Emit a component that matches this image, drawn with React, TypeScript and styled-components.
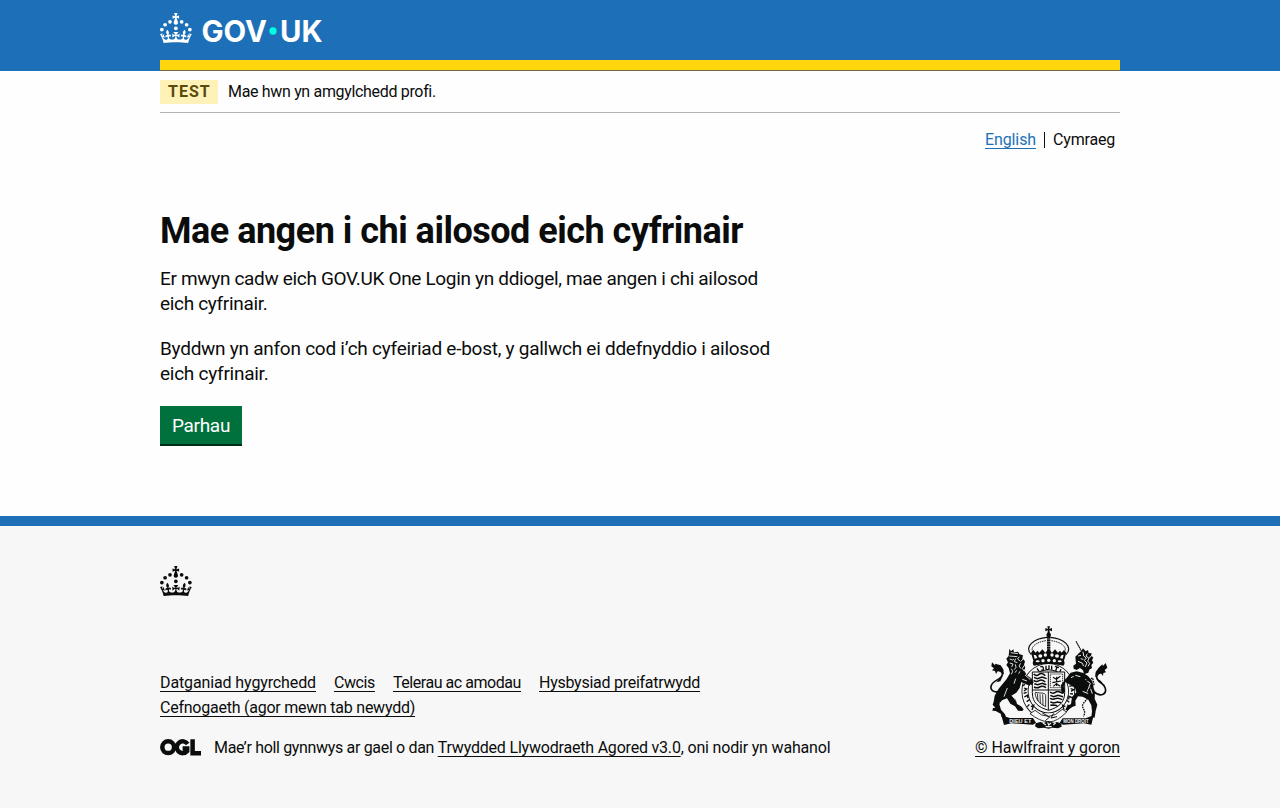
import React from "react";
import styled, { createGlobalStyle } from "styled-components";

const ink = "#0b0c0c";
const blue = "#1d70b8";

const GlobalStyle = createGlobalStyle`
  body {
    margin: 0;
    background: #fefefe;
    color: ${ink};
    font-family: Roboto, "Liberation Sans", sans-serif;
    font-size: 16px;
    line-height: 20px;
  }
`;

const Container = styled.div`
  width: 960px;
  margin: 0 auto;
`;

const Header = styled.header`
  background: ${blue};
  height: 71px;
`;

const HeaderInner = styled(Container)`
  box-sizing: border-box;
  height: 71px;
  padding-top: 13px;
  border-bottom: 1px solid #6b6740;
  box-shadow: inset 0 -10px 0 #ffd60d;
`;

const Logo = styled.svg`
  display: block;
  overflow: visible;
`;

const PhaseBanner = styled(Container)`
  box-sizing: border-box;
  display: flex;
  align-items: center;
  gap: 10px;
  height: 42px;
  padding-top: 1px;
  border-bottom: 1px solid #b1b4b6;
`;

const Tag = styled.strong`
  box-sizing: border-box;
  width: 58px;
  height: 24px;
  padding-left: 8px;
  background: #fff2b8;
  color: #5a4b0a;
  font-weight: 700;
  line-height: 24px;
  letter-spacing: 1px;
`;

const Text = styled.span<{ $tracking?: number }>`
  white-space: pre;
  letter-spacing: ${(p) => p.$tracking ?? 0}px;
`;

const Link = styled.a<{ $tracking?: number; $color?: string }>`
  color: ${(p) => p.$color ?? ink};
  letter-spacing: ${(p) => p.$tracking ?? 0}px;
  white-space: nowrap;
  text-decoration: underline;
  text-decoration-thickness: 1px;
  text-underline-offset: 3px;
  text-decoration-skip-ink: none;
`;

const LanguageNav = styled(Container)`
  box-sizing: border-box;
  display: flex;
  justify-content: flex-end;
  align-items: center;
  height: 54px;
  padding-right: 5px;
`;

const Divider = styled.span`
  width: 1px;
  height: 16px;
  margin: 0 8px;
  background: ${ink};
`;

const Main = styled.main`
  width: 960px;
  height: 349px;
  margin: 0 auto;
`;

const Content = styled.div`
  width: 640px;
  padding-top: 44px;
`;

const Title = styled.h1`
  margin: 0 0 15px;
  font-size: 36px;
  line-height: 40px;
  font-weight: 700;
  letter-spacing: -0.5px;
  white-space: nowrap;
`;

const Paragraph = styled.p<{ $tracking: number }>`
  width: 620px;
  margin: 0 0 20px;
  font-size: 19px;
  line-height: 25px;
  letter-spacing: ${(p) => p.$tracking}px;
`;

const Button = styled.button`
  box-sizing: border-box;
  display: block;
  width: 82px;
  height: 38px;
  padding: 2px 0 0;
  border: 0;
  background: #00703c;
  box-shadow: 0 2px 0 #002d18;
  color: #fff;
  font-family: inherit;
  font-size: 19px;
  line-height: 36px;
  letter-spacing: -0.3px;
`;

const Footer = styled.footer`
  box-sizing: border-box;
  height: 292px;
  padding-top: 40px;
  border-top: 10px solid ${blue};
  background: #f7f7f7;
`;

const FooterMeta = styled.div`
  display: flex;
  justify-content: space-between;
  align-items: flex-end;
  margin-top: 30px;
`;

const FooterLinks = styled.div`
  display: flex;
  flex-wrap: wrap;
  column-gap: 18px;
  width: 700px;
  line-height: 25px;
`;

const License = styled.div`
  display: flex;
  align-items: center;
  height: 25px;
  margin-top: 15px;
`;

const OglMark = styled.svg`
  margin-right: 13px;
  flex: none;
`;

const Copyright = styled.div`
  display: flex;
  flex-direction: column;
  align-items: flex-end;
  line-height: 25px;
`;

const Arms = styled.svg`
  margin: 0 12px 5px 0;
`;

function Crown() {
  return (
    <g>
      <circle cx="20" cy="17.6" r="3.7" />
      <circle cx="10.2" cy="23.5" r="3.7" />
      <circle cx="3.7" cy="33.2" r="3.7" />
      <circle cx="31.7" cy="30.6" r="3.7" />
      <circle cx="43.3" cy="17.6" r="3.7" />
      <circle cx="53.2" cy="23.5" r="3.7" />
      <circle cx="59.7" cy="33.2" r="3.7" />
      <path d="M33.1,9.8c.2-.1.3-.3.5-.5l4.6,2.4v-6.8l-4.6,1.5c-.1-.2-.3-.3-.5-.5l1.9-5.9h-6.7l1.9,5.9c-.2.1-.3.3-.5.5l-4.6-1.5v6.8l4.6-2.4c.1.2.3.3.5.5l-2.6,8c-.9,2.8,1.2,5.7,4.1,5.7h0c3,0,5.1-2.9,4.1-5.7l-2.6-8ZM37,37.9s-3.4,3.8-4.1,6.1c2.2,0,4.2-.5,6.4-2.8l-.7,8.5c-2-2.8-4.4-4.1-5.7-3.8.1,3.1.5,6.7,5.8,7.2,3.7.3,6.7-1.5,7-3.8.4-2.6-2-4.3-3.7-1.6-1.4-4.5,2.4-6.1,4.9-3.2-1.9-4.5-1.8-7.7,2.4-10.9,3,4,2.6,7.3-1.2,11.1,2.4-1.3,6.2,0,4,4.6-1.2-2.8-3.7-2.2-4.2.2-.3,1.7.7,3.7,3,4.2,1.9.3,4.7-.9,7-5.9-1.3,0-2.4.7-3.9,1.7l2.4-8c.6,2.3,1.4,3.7,2.2,4.5.6-1.6.5-2.8,0-5.3l5,1.8c-2.6,3.6-5.2,8.7-7.3,17.5-7.4-1.1-15.7-1.7-24.5-1.7h0c-8.8,0-17.1.6-24.5,1.7-2.1-8.9-4.7-13.9-7.3-17.5l5-1.8c-.5,2.5-.6,3.7,0,5.3.8-.8,1.6-2.3,2.2-4.5l2.4,8c-1.5-1-2.6-1.7-3.9-1.7,2.3,5,5.2,6.2,7,5.9,2.3-.4,3.3-2.4,3-4.2-.5-2.4-3-3.1-4.2-.2-2.2-4.6,1.6-6,4-4.6-3.7-3.7-4.2-7.1-1.2-11.1,4.2,3.2,4.3,6.4,2.4,10.9,2.5-2.8,6.3-1.3,4.9,3.2-1.8-2.7-4.1-1-3.7,1.6.3,2.3,3.3,4.1,7,3.8,5.4-.5,5.7-4.2,5.8-7.2-1.3-.2-3.7,1-5.7,3.8l-.7-8.5c2.2,2.3,4.2,2.7,6.4,2.8-.7-2.3-4.1-6.1-4.1-6.1h10.6Z" />
    </g>
  );
}

function GovUkLogo() {
  return (
    <Logo width="162" height="30" viewBox="0 0 324 60" fill="#fff">
      <Crown />
      <g fontFamily="Inter, Roboto, sans-serif" fontWeight="700" fontSize="59">
        <text x="83" y="57" textLength="131" lengthAdjust="spacingAndGlyphs">GOV</text>
        <text x="240" y="57" textLength="85" lengthAdjust="spacingAndGlyphs">UK</text>
      </g>
      <circle cx="226" cy="36" r="7.3" fill="#00ffe0" />
    </Logo>
  );
}

function RoyalArms() {
  return (
    <Arms width="118" height="104" viewBox="45 30 354 312" fill={ink} stroke="none">
      {/* crown */}
      <path d="M217 31h8l-2 8 8-3v10l-8-3 2 9h-8l2-9-8 3V36l8 3z" />
      <circle cx="221" cy="57" r="7" />
      <g fill="none" stroke={ink}>
        <path d="M169 116C145 92 178 67 216 64M273 116C297 92 264 67 226 64" strokeWidth="3.5" />
        <path d="M178 114C158 94 186 77 214 74M264 114C284 94 256 77 228 74" strokeWidth="2.5" strokeDasharray="5 2" />
        <path d="M221 62V108" strokeWidth="10" strokeDasharray="6 1.5" />
      </g>
      <path d="M168 110l7-8 7 8 5-6 6 6 9-10 9 10 10-12 10 12 9-10 9 10 6-6 5 6 7-8 7 8-7 24c3 6 2 11-2 15-28-7-60-7-88 0-4-4-5-9-2-15z" />
      <g fill="#f7f7f7">
        <path d="M176 116l7 2 4 8-8 2zM266 116l-7 2-4 8 8 2z" />
        <ellipse cx="196" cy="120" rx="6" ry="5" />
        <ellipse cx="246" cy="120" rx="6" ry="5" />
        <ellipse cx="211" cy="117" rx="5" ry="5" />
        <ellipse cx="231" cy="117" rx="5" ry="5" />
        <ellipse cx="188" cy="136" rx="6" ry="3" />
        <circle cx="204" cy="134" r="5" />
        <circle cx="221" cy="133" r="5" />
        <circle cx="238" cy="134" r="5" />
        <ellipse cx="254" cy="136" rx="6" ry="3" />
      </g>
      {/* garter */}
      <ellipse cx="220" cy="226" rx="70" ry="74" fill="#f7f7f7" stroke={ink} strokeWidth="21" />
      <ellipse cx="220" cy="226" rx="70" ry="74" fill="none" stroke="#f7f7f7" strokeWidth="16" />
      <g fill="none" stroke={ink} strokeWidth="4">
        <path d="M150 205l-8 5M147 216l8 3-8 6M146 232l9-3M148 243l9-5 2 8M155 257l9-6M163 265l-6 7M168 272l8-4-5 14" />
        <path d="M282 186l8-3M289 198l7-6M292 209l-9 2M287 218l9 3-8 5M294 234l-9-1M291 245l-9-4-1 9M283 259l-8-6M277 266l7 6M271 272l-8-4 4 14" />
        <path d="M186 157l6 9M196 153q7-4 9 3t-6 6M213 149v10q6 4 9-1v-10M230 149v12M240 151l12 4M246 153l-4 12M258 160l-4 9" />
      </g>
      {/* quartered shield */}
      <path d="M172 168h97v62c0 30-18 44-48 53-31-9-49-23-49-53z" fill="#f7f7f7" stroke={ink} strokeWidth="3" />
      <path d="M220 168v114M172 222h97" fill="none" stroke={ink} strokeWidth="3" />
      <g fill="none" stroke={ink} strokeWidth="4.5">
        <path d="M176 174q8 8 16 1t19 4M177 184l10 4 14-5 14 5M176 193q8 6 16 1t19 4M178 203l10 3 14-4 12 4M177 213q9 5 17 0t19 2" />
        <path d="M225 228q8 7 16 1t22 3M226 238l10 4 13-4 15 4M225 247q9 5 16 1t21 3M226 258l10 3 12-3 10 2M226 268l10-1 11 2" />
        <path d="M226 174h37v41h-37z" strokeWidth="2.5" strokeDasharray="4 2" />
        <path d="M234 184l10 6 12-9M245 182v28M232 200l26-5M235 211l9-8 12 8" strokeWidth="3.5" />
        <path d="M180 229c20 4 30 0 32 9v35M180 231c3 20 12 30 30 40M187 233l2 22M195 235l1 27M203 235l1 33" strokeWidth="2.5" />
      </g>
      {/* belt end */}
      <path d="M180 283q40 38 82-3l13 8q-28 29-53 30-28-2-57-25z" fill="#f7f7f7" stroke={ink} strokeWidth="2.5" />
      <path d="M202 291l22 12-13 11M236 292l-8 14 18-4" fill="none" stroke={ink} strokeWidth="3" />
      {/* lion */}
      <path d="M103 98l5 8 7-6 2 9 12-2 5 8 10 3-2 9 8 9-3 10 4 9-4 8 6 10-3 9 12 6 6 10-4 11-14-6-11-5-5 18-10 14-15 9 13 11 4 14 12 7 8 9-4 5-13-1-9-13-14-8-10-16-15 6-8 11 5 17 12 14 4 12-14-4-3-10-15-8-10-1 2-8 7-1-8-9 3-9 3-18 12-21 24-29 10-17-4-16-7-9 5-8-5-11 7-8z" />
      <path d="M144 170l20 14 12 14-5 9-21-6-15-13z" />
      <g fill="none" stroke="#f7f7f7" strokeWidth="2.6">
        <path d="M107 110l22 3M103 120l24 2M104 129l9 3 4-3M122 128l-4 9 9 3M104 141l10 3-4 9M121 145l2 9-5 7M133 122l-5 7 7 6M144 129l-7 8M137 142l-5 8 6 8M148 148l-6 9 5 8M109 158l4 8-4 9M125 163l-5 7M135 166l-4 7" />
        <path d="M122 188l-5 15M97 216l-10 26M142 190l14 5M150 177l16 14M75 258l5 12M114 242l9 12" />
      </g>
      <path d="M90 213C65 239 42 225 49 208c6-17 36-18 33-36-3-12-14-8-22-16" fill="none" stroke={ink} strokeWidth="5" />
      <path d="M51 139l9 9 1-5 16 5 8 12 2 16-8-9-11-1-5 8-3-9-9-2 6-6-8-6zM83 181l-7 15-12 3 7-9z" />
      {/* unicorn */}
      <path d="M303 76l17 31" stroke={ink} strokeWidth="3.5" strokeDasharray="5 1" fill="none" />
      <path d="M301 122l11-11 8-7 4-7 8 9 7-4 2 9 9 1-2 8 7 4-4 9 4 7-6 7 2 9-8 5-3 9-13 5-3-12-9-7-10 6-9-4-1-9 8-6z" />
      <path d="M287 170l18-4 20 5 14 9 13 16 4 20 4 12-1 20 8 18-5 19-3 20-10-1 2-18-2-18-9-17-17-9-14-1-8 13 1 15-9 3-15 11-7-2 5-10 12-7 3-21 13-14-4-13-15-10-14-8-5 13 4 15-6 9-5-6-1-22z" />
      <g fill="none" stroke="#f7f7f7" strokeWidth="2.8">
        <path d="M309 120l9-2M324 107l2 13 8 6-6 7 8 8-6 12M337 113l-4 7 9 7-4 8 6 7-5 9M347 120l-4 7M309 136l14 6 2 8M317 128l8 2" />
        <path d="M301 178l15 4M331 190l15 12-10 27M323 226l17 7M296 181l-8 4M345 213l7 20" />
      </g>
      <path d="M334 194l19-8 4 19-18 20 2 18-15 18c-12 15 12 21-1 40" fill="none" stroke={ink} strokeWidth="4" strokeDasharray="5 2.5" />
      <path d="M356 226c21 20 39 8 35-9-4-18-26-18-26-35 1-11 12-12 19-21" fill="none" stroke={ink} strokeWidth="5" />
      <path d="M392 141l-8 9-2-5-11 10-9 13-2 16 9-10 10-1 5 7 1-9 8-2-4-7 8-7zM363 187l11 13 10 5-6-10z" />
      {/* motto scrolls */}
      <path d="M79 298l25 8h70l9 14-9 6-65-4-22 5z" />
      <path d="M356 298l-24 9h-69l-9 13 10 6 63-4 22 4z" />
      <g fill="#f7f7f7" fontFamily="Liberation Sans, sans-serif" fontWeight="700" fontSize="17">
        <text x="103" y="320" textLength="66" lengthAdjust="spacingAndGlyphs">DIEU ET</text>
        <text x="265" y="320" textLength="76" lengthAdjust="spacingAndGlyphs">MON DROIT</text>
      </g>
      <path d="M182 322l14-4 10 3 15-6 16 6 10-3 12 5 1 9-11 5-17-2-11 3-14-3-18 2-9-6z" />
      <path d="M204 321l9 6M218 319l3 8 7-6M235 326l7-5M212 332h18" stroke="#f7f7f7" strokeWidth="3.5" fill="none" />
    </Arms>
  );
}

const Ogl = () => (
  <OglMark width="41" height="17" viewBox="0 0 41 17">
    <circle cx="8.2" cy="8.2" r="5.9" fill="none" stroke={ink} strokeWidth="4.5" />
    <path d="M27.6 5A5.9 5.9 0 1 0 27.2 12V9.4h-4.6M32.6.2v14H41" fill="none" stroke={ink} strokeWidth="4.5" />
  </OglMark>
);

const footerLinks: [string, number][] = [
  ["Datganiad hygyrchedd", -0.12],
  ["Cwcis", -0.4],
  ["Telerau ac amodau", -0.45],
  ["Hysbysiad preifatrwydd", -0.26],
  ["Cefnogaeth (agor mewn tab newydd)", -0.24],
];

export default function App() {
  return (
    <>
      <GlobalStyle />
      <Header>
        <HeaderInner>
          <GovUkLogo />
        </HeaderInner>
      </Header>
      <PhaseBanner>
        <Tag>TEST</Tag>
        <Text $tracking={-0.33}>Mae hwn yn amgylchedd profi.</Text>
      </PhaseBanner>
      <LanguageNav as="nav">
        <Link $color={blue} $tracking={-0.1}>English</Link>
        <Divider />
        <Text $tracking={-0.19}>Cymraeg</Text>
      </LanguageNav>
      <Main>
        <Content>
          <Title>Mae angen i chi ailosod eich cyfrinair</Title>
          <Paragraph $tracking={-0.33}>
            Er mwyn cadw eich GOV.UK One Login yn ddiogel, mae angen i chi ailosod eich cyfrinair.
          </Paragraph>
          <Paragraph $tracking={-0.26}>
            Byddwn yn anfon cod i’ch cyfeiriad e-bost, y gallwch ei ddefnyddio i ailosod eich cyfrinair.
          </Paragraph>
          <Button>Parhau</Button>
        </Content>
      </Main>
      <Footer>
        <Container>
          <Logo width="32" height="30" viewBox="0 0 64 60" fill={ink}>
            <Crown />
          </Logo>
          <FooterMeta>
            <div>
              <FooterLinks>
                {footerLinks.map(([label, tracking]) => (
                  <Link key={label} $tracking={tracking}>{label}</Link>
                ))}
              </FooterLinks>
              <License>
                <Ogl />
                <Text $tracking={-0.33}>Mae’r holl gynnwys ar gael o dan </Text>
                <Link $tracking={-0.2}>Trwydded Llywodraeth Agored v3.0</Link>
                <Text $tracking={-0.18}>, oni nodir yn wahanol</Text>
              </License>
            </div>
            <Copyright>
              <RoyalArms />
              <Link $tracking={-0.09}>© Hawlfraint y goron</Link>
            </Copyright>
          </FooterMeta>
        </Container>
      </Footer>
    </>
  );
}
